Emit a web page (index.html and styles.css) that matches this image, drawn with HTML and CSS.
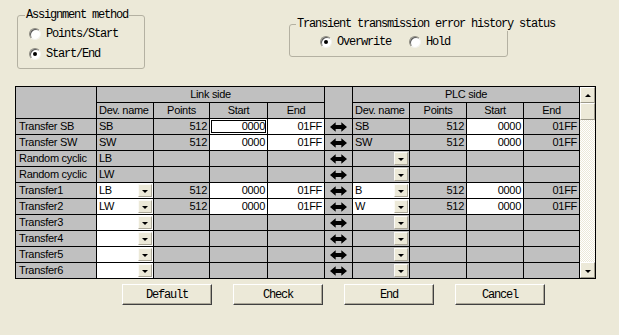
FILE: index.html
```html
<!DOCTYPE html>
<html lang="en">
<head>
<meta charset="UTF-8" />
<title>Assignment</title>
<link rel="stylesheet" href="styles.css">
</head>
<body>

<svg width="0" height="0" class="defs">
  <symbol id="both" viewBox="0 0 18 10"><path d="M0 5L6 0V3H12V0L18 5L12 10V7H6V10Z"/></symbol>
</svg>

<div class="top mono">
  <div class="group group-assign">
    <span class="group-title">Assignment method</span>
    <label class="radio-row"><span class="radio"></span>Points/Start</label>
    <label class="radio-row"><span class="radio on"></span>Start/End</label>
  </div>
  <div class="group group-history">
    <span class="group-title">Transient transmission error history status</span>
    <div class="radio-line">
      <label class="radio-row"><span class="radio on"></span>Overwrite</label>
      <label class="radio-row hold"><span class="radio"></span>Hold</label>
    </div>
  </div>
</div>

<div class="grid">
  <!-- header -->
  <div class="c corner"></div>
  <div class="c head link-head">Link side</div>
  <div class="c arrow-head"></div>
  <div class="c head plc-head">PLC side</div>
  <div class="scroll">
    <div class="sbtn"><span class="up"></span></div>
    <div class="thumb"></div>
    <div class="track"></div>
    <div class="sbtn"><span class="down"></span></div>
  </div>
  <div class="c">Dev. name</div><div class="c head">Points</div><div class="c head">Start</div><div class="c head">End</div>
  <div class="c">Dev. name</div><div class="c head">Points</div><div class="c head">Start</div><div class="c head">End</div>

  <!-- Transfer SB -->
  <div class="c lbl">Transfer SB</div>
  <div class="c">SB</div><div class="c r">512</div><div class="c r w focus">0000</div><div class="c r w">01FF</div>
  <div class="c arr"><svg><use href="#both"/></svg></div>
  <div class="c">SB</div><div class="c r">512</div><div class="c r w">0000</div><div class="c r">01FF</div>

  <!-- Transfer SW -->
  <div class="c lbl">Transfer SW</div>
  <div class="c">SW</div><div class="c r">512</div><div class="c r w">0000</div><div class="c r w">01FF</div>
  <div class="c arr"><svg><use href="#both"/></svg></div>
  <div class="c">SW</div><div class="c r">512</div><div class="c r w">0000</div><div class="c r">01FF</div>

  <!-- Random cyclic LB -->
  <div class="c lbl">Random cyclic</div>
  <div class="c">LB</div><div class="c"></div><div class="c"></div><div class="c"></div>
  <div class="c arr"><svg><use href="#both"/></svg></div>
  <div class="c dd"><span></span><i></i></div><div class="c"></div><div class="c"></div><div class="c"></div>

  <!-- Random cyclic LW -->
  <div class="c lbl">Random cyclic</div>
  <div class="c">LW</div><div class="c"></div><div class="c"></div><div class="c"></div>
  <div class="c arr"><svg><use href="#both"/></svg></div>
  <div class="c dd"><span></span><i></i></div><div class="c"></div><div class="c"></div><div class="c"></div>

  <!-- Transfer1 -->
  <div class="c lbl">Transfer1</div>
  <div class="c dd w"><span>LB</span><i></i></div><div class="c r">512</div><div class="c r w">0000</div><div class="c r w">01FF</div>
  <div class="c arr"><svg><use href="#both"/></svg></div>
  <div class="c dd w"><span>B</span><i></i></div><div class="c r">512</div><div class="c r w">0000</div><div class="c r">01FF</div>

  <!-- Transfer2 -->
  <div class="c lbl">Transfer2</div>
  <div class="c dd w"><span>LW</span><i></i></div><div class="c r">512</div><div class="c r w">0000</div><div class="c r w">01FF</div>
  <div class="c arr"><svg><use href="#both"/></svg></div>
  <div class="c dd w"><span>W</span><i></i></div><div class="c r">512</div><div class="c r w">0000</div><div class="c r">01FF</div>

  <!-- Transfer3 -->
  <div class="c lbl">Transfer3</div>
  <div class="c dd w"><span></span><i></i></div><div class="c"></div><div class="c"></div><div class="c"></div>
  <div class="c arr"><svg><use href="#both"/></svg></div>
  <div class="c dd"><span></span><i></i></div><div class="c"></div><div class="c"></div><div class="c"></div>

  <!-- Transfer4 -->
  <div class="c lbl">Transfer4</div>
  <div class="c dd w"><span></span><i></i></div><div class="c"></div><div class="c"></div><div class="c"></div>
  <div class="c arr"><svg><use href="#both"/></svg></div>
  <div class="c dd"><span></span><i></i></div><div class="c"></div><div class="c"></div><div class="c"></div>

  <!-- Transfer5 -->
  <div class="c lbl">Transfer5</div>
  <div class="c dd w"><span></span><i></i></div><div class="c"></div><div class="c"></div><div class="c"></div>
  <div class="c arr"><svg><use href="#both"/></svg></div>
  <div class="c dd"><span></span><i></i></div><div class="c"></div><div class="c"></div><div class="c"></div>

  <!-- Transfer6 -->
  <div class="c lbl">Transfer6</div>
  <div class="c dd w"><span></span><i></i></div><div class="c"></div><div class="c"></div><div class="c"></div>
  <div class="c arr"><svg><use href="#both"/></svg></div>
  <div class="c dd"><span></span><i></i></div><div class="c"></div><div class="c"></div><div class="c"></div>
</div>

<div class="buttons mono">
  <button class="btn">Default</button>
  <button class="btn">Check</button>
  <button class="btn">End</button>
  <button class="btn">Cancel</button>
</div>

</body>
</html>
```

FILE: styles.css
```css
:root {
  --face: #ece9d8;
  --cell: #c0c0c0;
}
body {
  margin: 0;
  width: 619px;
  height: 335px;
  overflow: hidden;
  background: var(--face);
  font-family: "Liberation Sans", Arial, sans-serif;
  font-size: 11px;
  color: #000;
}
.defs {
  position: absolute;
}
.mono {
  font-family: "Liberation Mono", "DejaVu Sans Mono", monospace;
  font-size: 12px;
  letter-spacing: -1.2px;
}

/* group boxes */
.top {
  height: 86px;
  display: flex;
  align-items: flex-start;
}
.group {
  box-sizing: border-box;
  border: 1px solid #b4b1a2;
  border-radius: 3px;
  display: flex;
  flex-direction: column;
}
.group-title {
  align-self: flex-start;
  margin-top: -7px;
  line-height: 13px;
  padding: 0 1px;
  background: var(--face);
  white-space: nowrap;
}
.group-assign {
  margin: 15px 0 0 17px;
  width: 128px;
  height: 54px;
}
.group-assign .group-title {
  margin-left: 7px;
}
.group-assign .radio-row {
  margin: 5px 0 0 11px;
}
.group-assign .radio-row + .radio-row {
  margin-top: 7px;
}
.group-history {
  margin: 24px 0 0 144px;
  width: 219px;
  height: 33px;
}
.group-history .group-title {
  margin-left: 6px;
}
.radio-line {
  display: flex;
  margin: 4px 0 0 30px;
}
.radio-line .hold {
  margin-left: 18px;
}
.radio-row {
  display: flex;
  align-items: center;
  gap: 5px;
  height: 13px;
}
.radio {
  box-sizing: border-box;
  width: 12px;
  height: 12px;
  border-radius: 50%;
  background: #fff;
  border: 1px solid;
  border-color: #8d8b80 #f4f3ee #f4f3ee #8d8b80;
  box-shadow: inset 1px 1px 0 #5a5a5a;
  display: flex;
  align-items: center;
  justify-content: center;
}
.radio.on::after {
  content: "";
  width: 4px;
  height: 4px;
  border-radius: 50%;
  background: #000;
}

/* grid */
.grid {
  margin-left: 15px;
  width: max-content;
  display: grid;
  grid-template-columns: 80px 56px 55px 57px 56px 27px 56px 56px 56px 55px 15px;
  grid-template-rows: repeat(12, 15px);
  gap: 1px;
  background: #000;
  border: 1px solid #000;
}
.c {
  background: var(--cell);
  line-height: 15px;
  padding: 0 2px;
  white-space: nowrap;
  overflow: hidden;
  letter-spacing: -0.3px;
}
.c.w {
  background: #fff;
}
.c.r {
  text-align: right;
}
.head {
  text-align: center;
}
.corner {
  grid-column: 1;
  grid-row: 1 / 3;
}
.link-head {
  grid-column: 2 / 6;
  grid-row: 1;
}
.arrow-head {
  grid-column: 6;
  grid-row: 1 / 3;
}
.plc-head {
  grid-column: 7 / 11;
  grid-row: 1;
}
.lbl {
  padding-left: 3px;
}
.focus {
  box-shadow: inset 0 0 0 1px #fff, inset 0 0 0 2px #000;
}
.arr {
  display: flex;
  align-items: center;
  justify-content: center;
  padding: 0;
}
.arr svg {
  width: 17px;
  height: 10px;
  fill: #000;
}
.dd {
  display: flex;
  align-items: center;
  padding-right: 1px;
}
.dd span {
  flex: 1;
}
.dd i {
  box-sizing: border-box;
  width: 14px;
  height: 13px;
  background: var(--face);
  border: 1px solid;
  border-color: #fbfaf6 #aca899 #aca899 #fbfaf6;
  display: flex;
  align-items: center;
  justify-content: center;
}
.dd i::after,
.sbtn .down {
  content: "";
  margin-top: 2px;
  border-left: 3px solid transparent;
  border-right: 3px solid transparent;
  border-top: 3px solid #000;
}

/* scroll bar */
.scroll {
  grid-column: 11;
  grid-row: 1 / -1;
  display: flex;
  flex-direction: column;
  background: var(--face);
}
.sbtn,
.thumb {
  box-sizing: border-box;
  height: 16px;
  background: var(--face);
  border: 1px solid;
  border-color: #fff #9d9a8b #9d9a8b #fff;
  display: flex;
  align-items: center;
  justify-content: center;
}
.thumb {
  height: 17px;
}
.track {
  flex: 1;
  background: conic-gradient(#fff 25%, var(--face) 0 50%, #fff 0 75%, var(--face) 0);
  background-size: 2px 2px;
}
.sbtn .up {
  border-left: 3px solid transparent;
  border-right: 3px solid transparent;
  border-bottom: 3px solid #000;
}

/* buttons */
.buttons {
  display: flex;
  gap: 21px;
  margin: 5px 0 0 122px;
}
.btn {
  width: 90px;
  height: 21px;
  padding: 0;
  background: var(--face);
  color: #000;
  font: inherit;
  letter-spacing: inherit;
  border: 1px solid;
  border-color: #fff #404040 #404040 #fff;
  box-shadow: inset -1px -1px 0 #aca899;
}
```
